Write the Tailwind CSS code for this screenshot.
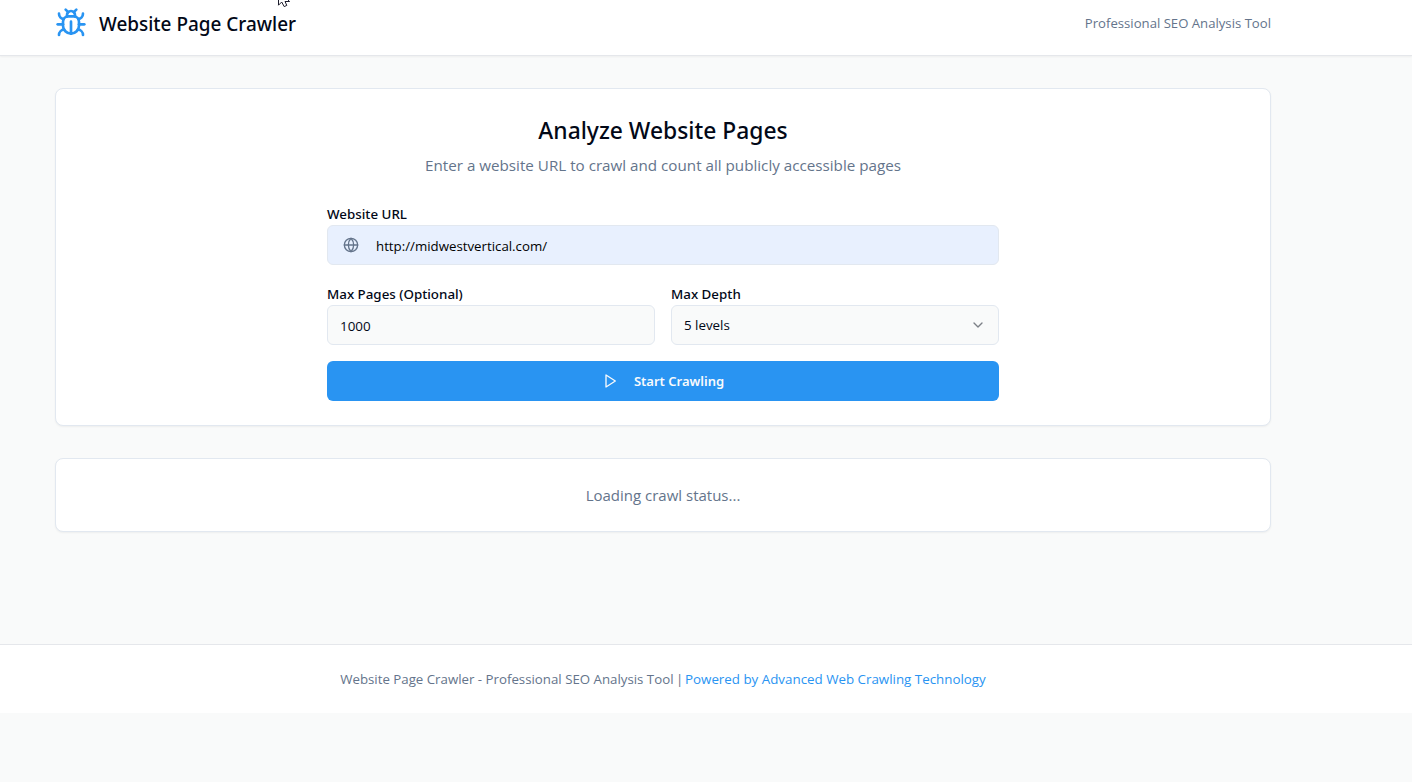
<!DOCTYPE html>
<html lang="en">
<head>
<meta charset="utf-8">
<title>Website Page Crawler</title>
<script src="https://cdn.jsdelivr.net/npm/@tailwindcss/browser@4"></script>
</head>
<body class="h-screen overflow-hidden bg-[#f9fafa] font-['Open_Sans',sans-serif] text-[#020817]">
<header class="-mt-[9px] h-[65px] border-b border-gray-200 bg-white pr-[86px] shadow-xs">
  <div class="mx-auto flex h-16 max-w-7xl items-center justify-between pr-8 pl-8">
    <div class="flex items-center gap-3">
      <svg class="size-8 text-[#2994f2]" viewBox="0 0 24 24" fill="none" stroke="currentColor" stroke-width="2" stroke-linecap="round" stroke-linejoin="round"><path d="m8 2 1.88 1.88"/><path d="M14.12 3.88 16 2"/><path d="M9 7.13v-1a3.003 3.003 0 1 1 6 0v1"/><path d="M12 20c-3.3 0-6-2.7-6-6v-3a4 4 0 0 1 4-4h4a4 4 0 0 1 4 4v3c0 3.3-2.7 6-6 6"/><path d="M12 20v-9"/><path d="M6.53 9C4.6 8.8 3 7.1 3 5"/><path d="M6 13H2"/><path d="M3 21c0-2.1 1.7-3.9 3.8-4"/><path d="M20.97 5c0 2.1-1.6 3.8-3.5 4"/><path d="M22 13h-4"/><path d="M17.2 17c2.1.1 3.8 1.9 3.8 4"/></svg>
      <h1 class="pt-0.5 font-['Noto_Sans',sans-serif] text-[18.95px] leading-7 font-medium">Website Page Crawler</h1>
    </div>
    <p class="text-[13.15px] leading-5 text-[#64748b]">Professional SEO Analysis Tool</p>
  </div>
</header>

<main class="h-[588px] pr-[86px]">
  <div class="mx-auto flex max-w-7xl flex-col gap-8 px-8 py-8">
    <section class="rounded-lg border border-slate-200 bg-white p-6 shadow-xs">
      <div class="mx-auto max-w-2xl">
        <div class="mb-6 text-center">
          <h2 class="mb-1.5 pt-0.5 font-['Noto_Sans',sans-serif] text-[22.85px] leading-8 font-medium">Analyze Website Pages</h2>
          <p class="text-[15.2px] leading-6 text-[#64748b]">Enter a website URL to crawl and count all publicly accessible pages</p>
        </div>
        <form class="flex flex-col gap-4">
          <div>
            <div class="h-6 pt-px font-['Noto_Sans',sans-serif] text-[13.35px] leading-6 font-medium">Website URL</div>
            <div class="flex h-10 items-center gap-[17px] rounded-md border border-slate-200 bg-[#e8f0fe] pl-[15px]">
              <svg class="size-4 text-[#64748b]" viewBox="0 0 24 24" fill="none" stroke="currentColor" stroke-width="2" stroke-linecap="round" stroke-linejoin="round"><circle cx="12" cy="12" r="10"/><path d="M12 2a14.5 14.5 0 0 0 0 20 14.5 14.5 0 0 0 0-20"/><path d="M2 12h20"/></svg>
              <span class="pt-0.5 text-[13.27px] leading-5 text-black">http://midwestvertical.com/</span>
            </div>
          </div>
          <div class="grid grid-cols-2 gap-4">
            <div>
              <div class="h-6 pt-px font-['Noto_Sans',sans-serif] text-[13.35px] leading-6 font-medium">Max Pages (Optional)</div>
              <div class="flex h-10 items-center rounded-md border border-slate-200 bg-[#f9fafa] px-3 pt-0.5 text-[13.4px] leading-5">1000</div>
            </div>
            <div>
              <div class="h-6 pt-px font-['Noto_Sans',sans-serif] text-[13.35px] leading-6 font-medium">Max Depth</div>
              <div class="flex h-10 items-center justify-between rounded-md border border-slate-200 bg-[#f9fafa] px-3 text-[13.35px] leading-5">
                <span>5 levels</span>
                <svg class="size-4 opacity-50" viewBox="0 0 24 24" fill="none" stroke="currentColor" stroke-width="2" stroke-linecap="round" stroke-linejoin="round"><path d="m6 9 6 6 6-6"/></svg>
              </div>
            </div>
          </div>
          <button type="button" class="flex h-10 items-center justify-center gap-4 rounded-md bg-[#2994f2] text-[#f8fafc]">
            <svg class="size-4" viewBox="0 0 24 24" fill="none" stroke="currentColor" stroke-width="2" stroke-linecap="round" stroke-linejoin="round"><polygon points="6 3 20 12 6 21 6 3"/></svg>
            <span class="font-['Noto_Sans',sans-serif] text-[13px] leading-5 font-semibold">Start Crawling</span>
          </button>
        </form>
      </div>
    </section>
    <section class="rounded-lg border border-slate-200 bg-white p-6 text-center text-[15px] leading-6 text-[#64748b] shadow-xs">Loading crawl status...</section>
  </div>
</main>

<footer class="h-[69px] border-t border-gray-200 bg-white py-6 pr-[86px] text-center leading-5 text-[#64748b]">
  <p class="text-[13.27px]">Website Page Crawler - Professional SEO Analysis Tool<span class="tracking-[-0.9px]"> | </span><a class="text-[13.35px] text-[#2994f2]">Powered by Advanced Web Crawling Technology</a></p>
</footer>

<svg class="absolute top-0 left-[276px] h-2 w-4" viewBox="0 0 16 8" fill="#fff" stroke="#1b1b2b" stroke-width="1"><path d="M2.5 -9.5V5.2L5.7 2L8.2 6.6L10.8 5.4L9 1.5H13.6Z"/></svg>
</body>
</html>
